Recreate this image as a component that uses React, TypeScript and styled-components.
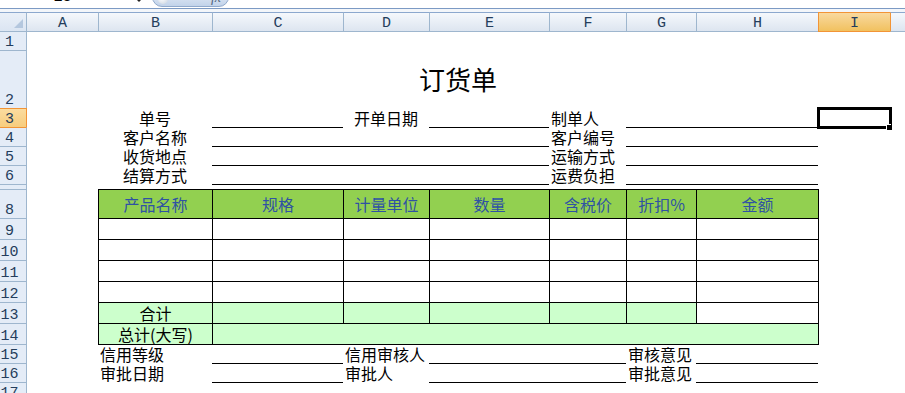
import React from 'react';
import styled, { createGlobalStyle, css } from 'styled-components';

const COLS = ['A', 'B', 'C', 'D', 'E', 'F', 'G', 'H', 'I', 'J'];
const COL_WIDTHS = [71, 114, 131, 86, 120, 77, 70, 122, 72, 72];
const ROW_HEIGHTS = [18, 58, 19, 19, 19, 19, 5, 29, 21, 21, 21, 21, 21, 21, 19, 19, 19];
const SELECTED = { col: 'I', row: 3 };

const CJK = `"Noto Sans CJK SC", "Noto Sans", sans-serif`;
const HEAD_FONT = `"Liberation Mono", "DejaVu Sans Mono", monospace`;
const ORANGE = '#f29436';
const HEAD_LINE = '#9eb6ce';

const HEADERS = ['产品名称', '规格', '计量单位', '数量', '含税价', '折扣%', '金额'];
const TABLE_COLS = ['B', 'C', 'D', 'E', 'F', 'G', 'H'];

const ORDER_INFO = [
  { r: 4, left: '客户名称', right: '客户编号' },
  { r: 5, left: '收货地点', right: '运输方式' },
  { r: 6, left: '结算方式', right: '运费负担' },
];

const APPROVALS = [
  { r: 15, first: '信用等级', second: '信用审核人', third: '审核意见' },
  { r: 16, first: '审批日期', second: '审批人', third: '审批意见' },
];

const GlobalStyle = createGlobalStyle`
  html, body {
    margin: 0;
    padding: 0;
    background: #fff;
  }

  body {
    width: 905px;
    height: 393px;
    overflow: hidden;
  }
`;

interface Place {
  $c: string;
  $r: number;
  $span?: number;
}

const placed = css<Place>`
  grid-column: ${({ $c }) => COLS.indexOf($c) + 2} / span ${({ $span }) => $span ?? 1};
  grid-row: ${({ $r }) => $r + 1};
`;

const App: React.FC = () => {
  const bodyRows = [9, 10, 11, 12];

  return (
    <>
      <GlobalStyle />
      <FormulaBar>
        <NameBox>13</NameBox>
        <DropZone>
          <DropArrow />
        </DropZone>
        <FxButton>
          <FxDot />
          <FxText>fx</FxText>
        </FxButton>
      </FormulaBar>
      <BarGap />

      <Sheet>
        <Corner>
          <svg width="9" height="9" viewBox="0 0 9 9">
            <path d="M9 0 L9 9 L0 9 Z" fill="#b4c7de" />
          </svg>
        </Corner>
        {COLS.map((c, i) => (
          <ColHead
            key={c}
            $c={c}
            $first={i === 0}
            $selected={c === SELECTED.col}
            $afterSelected={COLS[i - 1] === SELECTED.col}
          >
            {c === 'J' ? '' : c}
          </ColHead>
        ))}
        {ROW_HEIGHTS.map((_, i) => (
          <RowHead
            key={i}
            $r={i + 1}
            $selected={i + 1 === SELECTED.row}
            $afterSelected={i === SELECTED.row}
          >
            {i + 1}
          </RowHead>
        ))}

        <Title $c="B" $r={2} $span={7}>订货单</Title>

        <Label $c="B" $r={3}>单号</Label>
        <Underline $c="C" $r={3} />
        <Label $c="D" $r={3}>开单日期</Label>
        <Underline $c="E" $r={3} />
        <Label $c="F" $r={3} $left>制单人</Label>
        <Underline $c="G" $r={3} $span={2} />
        <SelectedCell $c="I" $r={3}>
          <SelectionFrame>
            <FillHandle />
          </SelectionFrame>
        </SelectedCell>

        {ORDER_INFO.map(({ r, left, right }) => (
          <React.Fragment key={r}>
            <Label $c="B" $r={r}>{left}</Label>
            <Underline $c="C" $r={r} $span={3} />
            <Label $c="F" $r={r} $left>{right}</Label>
            <Underline $c="G" $r={r} $span={2} />
          </React.Fragment>
        ))}

        {HEADERS.map((h, i) => (
          <TableCell key={h} $c={TABLE_COLS[i]} $r={8} $fill="#92d050" $ink="#2f52a3" $edgeR={i === 6}>
            {h}
          </TableCell>
        ))}

        {bodyRows.map((r) =>
          TABLE_COLS.map((c) => <TableCell key={`${r}${c}`} $c={c} $r={r} $fill="#fff" $edgeR={c === 'H'} />),
        )}

        <TableCell $c="B" $r={13} $fill="#ccffcc">合计</TableCell>
        {TABLE_COLS.slice(1, 6).map((c) => (
          <TableCell key={`13${c}`} $c={c} $r={13} $fill="#ccffcc" />
        ))}
        <TableCell $c="H" $r={13} $fill="#fff" $edgeR />

        <TableCell $c="B" $r={14} $fill="#ccffcc" $edgeB>总计(大写)</TableCell>
        <TableCell $c="C" $r={14} $span={6} $fill="#ccffcc" $edgeR $edgeB />

        {APPROVALS.map(({ r, first, second, third }) => (
          <React.Fragment key={r}>
            <Label $c="B" $r={r} $left>{first}</Label>
            <Underline $c="C" $r={r} />
            <Label $c="D" $r={r} $left>{second}</Label>
            <Underline $c="E" $r={r} $span={2} />
            <Label $c="G" $r={r} $left>{third}</Label>
            <Underline $c="H" $r={r} />
          </React.Fragment>
        ))}
      </Sheet>
    </>
  );
};

const FormulaBar = styled.div`
  display: flex;
  align-items: flex-end;
  height: 8px;
  overflow: hidden;
  background: #fff;
  border-bottom: 1px solid #7c9ac4;
`;

const NameBox = styled.div`
  box-sizing: border-box;
  flex: 0 0 125px;
  height: 20px;
  display: flex;
  align-items: flex-end;
  justify-content: center;
  padding-bottom: 2px;
  font: 15px/16px ${HEAD_FONT};
  color: #000;
`;

const DropZone = styled.div`
  box-sizing: border-box;
  flex: 0 0 27px;
  height: 20px;
  display: flex;
  align-items: flex-end;
  justify-content: center;
  padding-bottom: 6px;
`;

const DropArrow = styled.span`
  width: 0;
  height: 0;
  border-left: 3px solid transparent;
  border-right: 3px solid transparent;
  border-top: 3px solid #222;
`;

const FxButton = styled.div`
  box-sizing: border-box;
  flex: 0 0 77px;
  height: 20px;
  margin-bottom: 1px;
  display: flex;
  align-items: flex-end;
  justify-content: space-between;
  padding: 0 7px 1px 5px;
  border: 1px solid #91aacc;
  border-radius: 10px;
  background: linear-gradient(#eef3fa, #c2d3ea);
`;

const FxDot = styled.span`
  width: 10px;
  height: 10px;
  margin-bottom: 1px;
  border-radius: 50%;
  background: radial-gradient(circle at 40% 40%, #ffffff, #c9d3df);
`;

const FxText = styled.span`
  font: italic 14px/14px "Liberation Serif", serif;
  color: #51657f;
`;

const BarGap = styled.div`
  height: 3px;
  background: #f3f6fa;
`;

const Sheet = styled.div`
  display: grid;
  grid-template-columns: 27px ${COL_WIDTHS.map((w) => `${w}px`).join(' ')};
  grid-template-rows: 20px ${ROW_HEIGHTS.map((h) => `${h}px`).join(' ')};
  width: 905px;
  overflow: hidden;
  background: #fff;
`;

const Corner = styled.div`
  grid-column: 1;
  grid-row: 1;
  box-sizing: border-box;
  display: flex;
  align-items: flex-end;
  justify-content: flex-end;
  padding: 0 3px 3px 0;
  border-top: 1px solid #8ca8ce;
  border-right: 1px solid ${HEAD_LINE};
  border-bottom: 1px solid ${HEAD_LINE};
  background: linear-gradient(#eaf0f8, #dbe5f2);
`;

const ColHead = styled.div<{ $c: string; $first?: boolean; $selected?: boolean; $afterSelected?: boolean }>`
  grid-row: 1;
  grid-column: ${({ $c }) => COLS.indexOf($c) + 2};
  box-sizing: border-box;
  display: flex;
  align-items: flex-end;
  justify-content: center;
  border-top: 1px solid ${({ $selected }) => ($selected ? ORANGE : '#8ca8ce')};
  border-bottom: 1px solid ${({ $selected }) => ($selected ? ORANGE : HEAD_LINE)};
  border-left: ${({ $first, $selected, $afterSelected }) =>
    $first ? 'none' : `1px solid ${$selected || $afterSelected ? ORANGE : HEAD_LINE}`};
  background: ${({ $selected }) =>
    $selected ? 'linear-gradient(#f9d99f, #f1c15f)' : 'linear-gradient(#f5f8fc, #dde5f0)'};
  font: 15px/15px ${HEAD_FONT};
  color: #243d5c;
`;

const RowHead = styled.div<{ $r: number; $selected?: boolean; $afterSelected?: boolean }>`
  grid-column: 1;
  grid-row: ${({ $r }) => $r + 1};
  box-sizing: border-box;
  display: flex;
  align-items: flex-end;
  justify-content: center;
  padding-right: 7px;
  overflow: hidden;
  border-right: 1px solid ${({ $selected }) => ($selected ? ORANGE : HEAD_LINE)};
  border-top: ${({ $r, $selected, $afterSelected }) =>
    $r === 1 ? 'none' : `1px solid ${$selected || $afterSelected ? ORANGE : HEAD_LINE}`};
  background: ${({ $selected }) => ($selected ? 'linear-gradient(#fbdc9f, #f7cd7e)' : '#e4ecf7')};
  font: 15px/15px ${HEAD_FONT};
  color: #243d5c;
`;

const Title = styled.div<Place>`
  ${placed};
  display: flex;
  align-items: center;
  justify-content: center;
  font: 26px/30px ${CJK};
  color: #000;
`;

const Label = styled.div<Place & { $left?: boolean }>`
  ${placed};
  display: flex;
  align-items: flex-end;
  justify-content: ${({ $left }) => ($left ? 'flex-start' : 'center')};
  padding-left: ${({ $left }) => ($left ? '2px' : '0')};
  font: 16px/18px ${CJK};
  color: #000;
  white-space: nowrap;
`;

const Underline = styled.div<Place>`
  ${placed};
  box-shadow: 0 1px 0 #000;
`;

const SelectedCell = styled.div<Place>`
  ${placed};
  position: relative;
`;

const SelectionFrame = styled.div`
  position: absolute;
  top: -1px;
  left: -1px;
  right: -2px;
  bottom: -2px;
  border: 3px solid #000;
`;

const FillHandle = styled.span`
  position: absolute;
  right: -3px;
  bottom: -4px;
  width: 5px;
  height: 5px;
  background: #000;
  box-shadow: -1px -1px 0 #fff;
`;

const TableCell = styled.div<Place & { $fill: string; $ink?: string; $edgeR?: boolean; $edgeB?: boolean }>`
  ${placed};
  box-sizing: border-box;
  display: flex;
  align-items: center;
  justify-content: center;
  border-top: 1px solid #000;
  border-left: 1px solid #000;
  background: ${({ $fill }) => $fill};
  box-shadow: ${({ $edgeR, $edgeB }) =>
    [$edgeR && '1px 0 0 #000', $edgeB && '0 1px 0 #000', $edgeR && $edgeB && '1px 1px 0 #000']
      .filter(Boolean)
      .join(', ') || 'none'};
  font: 16px/18px ${CJK};
  color: ${({ $ink }) => $ink ?? '#000'};
  white-space: nowrap;
`;

export default App;
